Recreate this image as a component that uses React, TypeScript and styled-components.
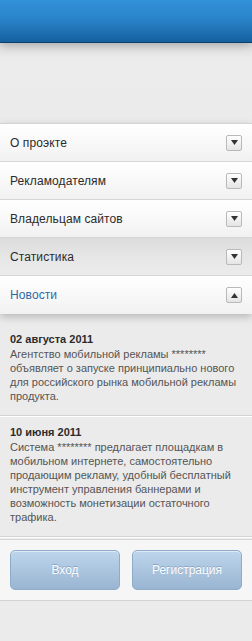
import React from "react";
import styled, { createGlobalStyle } from "styled-components";

const Global = createGlobalStyle`
  html, body { margin: 0; padding: 0; background: #ebebeb; }
  body { font-family: "Liberation Sans", Arial, sans-serif; }
  * { box-sizing: border-box; }
`;

const Page = styled.div`
  width: 252px;
  min-height: 641px;
  background: #ebebeb;
  display: flex;
  flex-direction: column;
`;

const Header = styled.div`
  height: 43px;
  background: linear-gradient(to bottom, #3291d9 0%, #2a84c9 45%, #15609f 100%);
  border-bottom: 1px solid #0d3f6b;
  position: relative;
  z-index: 1;
  box-shadow: 0 2px 10px rgba(0, 0, 0, 0.28);
`;

const Spacer = styled.div`
  height: 80px;
  background: linear-gradient(to bottom, #e2e2e2 0px, #ececec 18px, #ebebeb 100%);
`;

const Menu = styled.div`
  border-top: 1px solid #d3d3d3;
  box-shadow: 0 3px 8px rgba(0, 0, 0, 0.22);
  position: relative;
  z-index: 1;
`;

const Row = styled.div<{ $pressed?: boolean }>`
  height: 38px;
  display: flex;
  align-items: center;
  justify-content: space-between;
  padding: 0 10px 0 10px;
  border-bottom: 1px solid #d6d6d6;
  background: ${(p) =>
    p.$pressed
      ? "linear-gradient(to bottom, #dcdcdc 0%, #e6e6e6 50%, #ececec 100%)"
      : "linear-gradient(to bottom, #ffffff 0%, #f7f7f7 60%, #f1f1f1 100%)"};
  &:last-child { border-bottom: none; }
`;

const Label = styled.span<{ $active?: boolean }>`
  font-size: 12px;
  color: ${(p) => (p.$active ? "#2a6aa8" : "#2b2b2b")};
  letter-spacing: 0.1px;
`;

const Toggle = styled.span`
  width: 16px;
  height: 16px;
  border: 1px solid #b9b9b9;
  border-radius: 2px;
  background: linear-gradient(to bottom, #ffffff, #e4e4e4);
  display: flex;
  align-items: center;
  justify-content: center;
`;

const News = styled.div`
  padding-top: 9px;
`;

const Item = styled.div`
  padding: 9px 10px 12px 10px;
  border-bottom: 1px solid #d3d3d3;
  box-shadow: 0 1px 0 #ffffff;
`;

const DateLine = styled.div`
  font-size: 11px;
  font-weight: bold;
  color: #2b2b2b;
  line-height: 14px;
  margin-bottom: 1px;
`;

const Text = styled.div`
  font-size: 11px;
  color: #555555;
  line-height: 14px;
`;

const Footer = styled.div`
  margin-top: 2px;
  background: #f6f6f6;
  border-top: 1px solid #d6d6d6;
  border-bottom: 1px solid #d3d3d3;
  padding: 10px 10px 10px 10px;
  display: grid;
  grid-template-columns: 110px 110px;
  justify-content: space-between;
`;

const Button = styled.button`
  height: 40px;
  border: 1px solid #8eabc8;
  border-radius: 5px;
  background: linear-gradient(to bottom, #bed6ec 0%, #abc5df 50%, #9ab5d2 100%);
  color: #ffffff;
  font-family: "Liberation Sans", Arial, sans-serif;
  font-size: 12px;
  text-shadow: 0 -1px 0 rgba(60, 90, 130, 0.35);
  box-shadow: inset 0 1px 0 rgba(255, 255, 255, 0.5);
  padding: 0;
`;

const Arrow = ({ up }: { up?: boolean }) => (
  <svg width="7" height="5" viewBox="0 0 7 5">
    {up ? <polygon points="0,5 7,5 3.5,0" fill="#333" /> : <polygon points="0,0 7,0 3.5,5" fill="#333" />}
  </svg>
);

const items = [
  { label: "О проэкте" },
  { label: "Рекламодателям" },
  { label: "Владельцам сайтов" },
  { label: "Статистика", pressed: true },
  { label: "Новости", active: true },
];

export default function App() {
  return (
    <Page>
      <Global />
      <Header />
      <Spacer />
      <Menu>
        {items.map((it) => (
          <Row key={it.label} $pressed={it.pressed}>
            <Label $active={it.active}>{it.label}</Label>
            <Toggle>
              <Arrow up={it.active} />
            </Toggle>
          </Row>
        ))}
      </Menu>
      <News>
        <Item>
          <DateLine>02 августа 2011</DateLine>
          <Text>
            Агентство мобильной рекламы ******** объявляет о запуске принципиально нового для российского рынка мобильной рекламы продукта.
          </Text>
        </Item>
        <Item>
          <DateLine>10 июня 2011</DateLine>
          <Text>
            Система ******** предлагает площадкам в мобильном интернете, самостоятельно продающим рекламу, удобный бесплатный инструмент управления баннерами и возможность монетизации остаточного трафика.
          </Text>
        </Item>
      </News>
      <Footer>
        <Button>Вход</Button>
        <Button>Регистрация</Button>
      </Footer>
    </Page>
  );
}
